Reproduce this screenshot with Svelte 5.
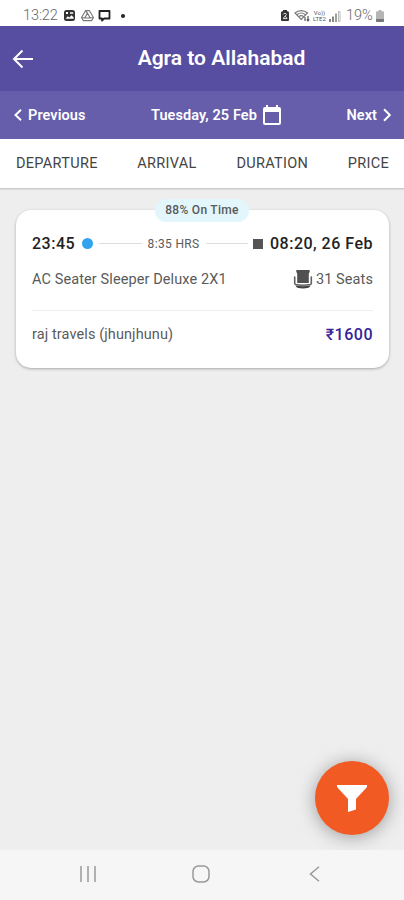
<script lang="ts">
    const sortOptions = ["DEPARTURE", "ARRIVAL", "DURATION", "PRICE"];

    const trip = {
        onTime: "88% On Time",
        departure: "23:45",
        duration: "8:35 HRS",
        arrival: "08:20, 26 Feb",
        coach: "AC Seater Sleeper Deluxe 2X1",
        seats: 31,
        operator: "raj travels (jhunjhunu)",
        price: 1600,
    };
</script>

<div class="screen">
    <div class="status">
        <span class="clock">13:22</span>
        <svg class="gallery" width="13" height="13" viewBox="0 0 13 13">
            <rect x="1" y="1" width="11" height="11" rx="2.5" fill="#333" />
            <path d="M3 3h2v2H3zM7 3.2h3.2v1.6H7zM2.6 9.8l2.2-2.6 1.6 1.2 2-2.2 2.2 2v1.6z" fill="#fff" />
        </svg>
        <svg class="drive" width="13" height="13" viewBox="0 0 13 13" fill="none" stroke="#777" stroke-width="1.1">
            <path d="M4.6 1.6h3.8l4 7-1.8 3H2.4l-1.8-3z" />
            <path d="M6.5 4.2 9.2 9H3.8zM4.6 1.6l1.9 3M.8 8.7h3M12.2 8.7h-3" />
        </svg>
        <svg class="message" width="13" height="13" viewBox="0 0 13 13">
            <path d="M1.5 2h10v7.5H6.2L4 11.6V9.5H1.5z" fill="none" stroke="#222" stroke-width="1.8" stroke-linejoin="round" />
        </svg>
        <span class="dot"></span>
        <div class="signals">
            <svg width="10" height="13" viewBox="0 0 10 13">
                <path d="M3 1h4v1.3h1.2L9 3.5v8L8 12H2l-1-.5v-8l.8-1.2H3z" fill="#333" />
                <path d="M3 5.5C3.5 4 6.5 4 6.5 5.5L3.5 9M5 7l2.2 2.5M3 9.6h4" fill="none" stroke="#ddd" />
            </svg>
            <svg class="wifi" width="17" height="13" viewBox="0 0 17 13" fill="none" stroke="#777" stroke-width="1.1">
                <path d="M1 4c3.5-3.2 9-3.2 12.5 0L7.2 10.5zM3.2 5.5c2.4-1.8 5.7-1.8 8 0M5 7.5c1.3-1 3.2-1 4.5 0" />
                <path d="M11 8v4M14 7v5M12.8 10.5 14 12l1.3-1.5" stroke="#444" />
            </svg>
            <span class="volte"><span>Vo))</span><span>LTE2</span></span>
            <svg class="bars" width="12" height="12" viewBox="0 0 12 12">
                <path d="M0 9h2v3H0zM3 6.5h2V12H3zM6.2 3.5h1.6V12H6.2z" fill="#888" />
                <path d="M9.5 1.5h1.5v10H9.5z" fill="none" stroke="#aaa" stroke-width=".8" />
            </svg>
            <span class="percent">19%</span>
            <svg width="8" height="12" viewBox="0 0 8 12">
                <path d="M2.5 0h3v1.2H7q1 0 1 1V11q0 1-1 1H1q-1 0-1-1V2.2q0-1 1-1h1.5z" fill="#b5b5b5" />
                <path d="M0 9h8v2q0 1-1 1H1q-1 0-1-1z" fill="#777" />
            </svg>
        </div>
    </div>

    <header>
        <svg class="back" width="22" height="20" viewBox="0 0 22 20" fill="none" stroke="#fff" stroke-width="2">
            <path d="M21 10H2M10.5 1.5 2 10l8.5 8.5" />
        </svg>
        <h1>Agra to Allahabad</h1>
    </header>

    <div class="dates">
        <div class="step">
            <svg width="8" height="12" viewBox="0 0 8 12"><path d="M7 .8 1.5 6 7 11.2" /></svg>
            <span class="prev">Previous</span>
        </div>
        <div class="day">
            <span>Tuesday, 25 Feb</span>
            <svg width="18" height="20" viewBox="0 0 18 20">
                <path d="M2 2h14q2 0 2 2v14q0 2-2 2H2q-2 0-2-2V4q0-2 2-2zM2 7v11h14V7z" fill="#fff" fill-rule="evenodd" />
                <path d="M3 0h2v3H3zM13 0h2v3h-2z" fill="#fff" />
            </svg>
        </div>
        <div class="step">
            <span class="next">Next</span>
            <svg width="8" height="14" viewBox="0 0 8 14"><path d="M1 1.2 6.8 7 1 12.8" /></svg>
        </div>
    </div>

    <nav class="sort">
        {#each sortOptions as option}
            <span>{option}</span>
        {/each}
    </nav>

    <main>
        <article class="card">
            <span class="badge">{trip.onTime}</span>
            <div class="times">
                <span class="time">{trip.departure}</span>
                <span class="start"></span>
                <span class="line"></span>
                <span class="duration">{trip.duration}</span>
                <span class="line"></span>
                <span class="end"></span>
                <span class="time arrival">{trip.arrival}</span>
            </div>
            <div class="row coach">
                <span>{trip.coach}</span>
                <span class="seats">
                    <svg width="20" height="19" viewBox="0 0 20 19">
                        <path d="M4.2 0h11.6q1.4 0 1 1.4l-1 2.3V13H4.2V3.7l-1-2.3Q2.8 0 4.2 0z" fill="#505050" />
                        <path d="M1.7 7v6.2q0 1 1 1.3 7.3 1.6 14.6 0 1-.3 1-1.3V7" fill="none" stroke="#606060" stroke-width="1.6" stroke-linecap="round" />
                        <path d="M2.5 15.5q7.5 1.5 15 0-.3 1.6-2 2.2-5.500 1.600-11 0-1.700-.6-2-2.200z" fill="#404040" />
                    </svg>
                    {trip.seats} Seats
                </span>
            </div>
            <div class="row fare">
                <span class="operator">{trip.operator}</span>
                <span class="price">₹{trip.price}</span>
            </div>
        </article>

        <button class="filter" aria-label="Filter">
            <svg width="30" height="27" viewBox="0 0 30 27">
                <path d="M0 0h30v2L19 14v10.500L11 27V14L0 2z" fill="#fff" />
            </svg>
        </button>
    </main>

    <footer>
        <svg width="16" height="18" viewBox="0 0 16 18"><path d="M1 1v16M8 1v16M15 1v16" /></svg>
        <svg class="home" width="18" height="18" viewBox="0 0 18 18"><rect x="1" y="1" width="16" height="16" rx="5.5" /></svg>
        <svg width="11" height="18" viewBox="0 0 11 18"><path d="M10 1.800 1.500 9l8.500 7.200" /></svg>
    </footer>
</div>

<style>
    :global(body) {
        margin: 0;
    }

    .screen {
        width: 404px;
        height: 900px;
        display: flex;
        flex-direction: column;
        overflow: hidden;
        background: #eee;
        font-family: Roboto, "Noto Sans", sans-serif;
        color: #5a5a5a;
    }

    svg {
        flex: none;
        display: block;
    }

    .status {
        height: 26px;
        display: flex;
        align-items: center;
        box-sizing: border-box;
        padding: 5px 20px 0 23px;
        background: #fff;
    }

    .clock,
    .percent {
        font-size: 14.5px;
        font-weight: 300;
        line-height: 16px;
        color: #666;
    }

    .clock {
        width: 40px;
        letter-spacing: -0.1px;
    }

    .drive {
        margin-left: 5px;
    }

    .message {
        margin-left: 4px;
    }

    .dot {
        width: 4px;
        height: 4px;
        margin-left: 10px;
        border-radius: 50%;
        background: #222;
    }

    .signals {
        display: flex;
        align-items: center;
        margin-left: auto;
    }

    .wifi {
        margin-left: 4px;
    }

    .volte {
        width: 15px;
        display: flex;
        flex-direction: column;
        align-items: center;
        margin-left: 1px;
        font-size: 6px;
        line-height: 6px;
        color: #555;
    }

    .bars {
        margin: 0 5px 0 2px;
    }

    .percent {
        width: 29px;
        margin-right: 1px;
    }

    header {
        height: 65px;
        display: grid;
        grid-template-columns: 22px 1fr 22px;
        align-items: center;
        box-sizing: border-box;
        padding: 0 0 0 12px;
        background: #574da1;
        color: #fff;
    }

    h1 {
        margin: 0 0 1px;
        padding-left: 27px;
        font-size: 21px;
        font-weight: 600;
        line-height: 24px;
        text-align: center;
    }

    .dates {
        height: 48px;
        display: flex;
        align-items: center;
        justify-content: space-between;
        box-sizing: border-box;
        padding: 0 13px 0 14px;
        background: #665eaa;
        color: #fff;
        font-size: 14.5px;
        font-weight: 600;
        letter-spacing: 0.08px;
    }

    .step,
    .day {
        display: flex;
        align-items: center;
        gap: 6px;
    }

    .step path {
        fill: none;
        stroke: #fff;
        stroke-width: 2;
    }

    .sort {
        height: 50px;
        display: flex;
        align-items: center;
        justify-content: space-between;
        box-sizing: border-box;
        padding: 0 15px 0 16px;
        background: #fff;
        border-bottom: 1px solid #ccc;
        box-shadow: 0 1px 1px rgba(0, 0, 0, 0.07);
        font-size: 14.5px;
        font-weight: 400;
        letter-spacing: 0.3px;
        color: #444;
    }

    main {
        position: relative;
        flex: 1;
        padding: 21px 15px 0 16px;
    }

    .card {
        position: relative;
        height: 158px;
        box-sizing: border-box;
        padding: 22px 16px 0;
        border-radius: 15px;
        background: #fff;
        box-shadow: 0 1px 3px rgba(0, 0, 0, 0.3);
    }

    .badge {
        position: absolute;
        top: -11px;
        left: 139px;
        width: 94px;
        height: 23px;
        border-radius: 12px;
        background: #e2f6fb;
        font-size: 12px;
        font-weight: 500;
        letter-spacing: 0.3px;
        line-height: 23px;
        text-align: center;
    }

    .times {
        height: 23px;
        display: flex;
        align-items: center;
        white-space: nowrap;
    }

    .time {
        font-size: 16px;
        font-weight: 500;
        letter-spacing: 0.5px;
        color: #222;
    }

    .start {
        width: 11px;
        height: 11px;
        margin: 0 6px 0 7px;
        border-radius: 50%;
        background: #31a3ef;
    }

    .line {
        height: 1px;
        flex: 1;
        background: #ddd;
    }

    .duration {
        margin: 0 6px;
        font-size: 12px;
        letter-spacing: 0.35px;
    }

    .end {
        width: 10px;
        height: 10px;
        margin: 0 7px 0 5px;
        background: #555;
    }

    .row {
        display: flex;
        justify-content: space-between;
        font-size: 14.5px;
        letter-spacing: 0.1px;
    }

    .coach {
        height: 56px;
        align-items: center;
        box-sizing: border-box;
        padding-bottom: 6px;
        border-bottom: 1px solid #eee;
    }

    .seats {
        display: flex;
        align-items: center;
        gap: 3px;
    }

    .fare {
        height: 46px;
        align-items: center;
    }

    .price {
        font-size: 16px;
        font-weight: 500;
        letter-spacing: 0.5px;
        color: #35249a;
    }

    .filter {
        position: absolute;
        right: 15px;
        bottom: 15px;
        width: 74px;
        height: 74px;
        display: flex;
        align-items: center;
        justify-content: center;
        padding: 0;
        border: 0;
        border-radius: 50%;
        background: #f15a22;
        box-shadow: 0 2px 18px rgba(0, 0, 0, 0.35);
    }

    footer {
        position: relative;
        height: 50px;
        display: flex;
        align-items: center;
        justify-content: space-between;
        box-sizing: border-box;
        padding: 0 84px 2px 80px;
        background: #f6f6f6;
    }

    footer svg {
        fill: none;
        stroke: #999;
        stroke-width: 1.5;
    }

    footer .home {
        margin-right: 4px;
    }
</style>
